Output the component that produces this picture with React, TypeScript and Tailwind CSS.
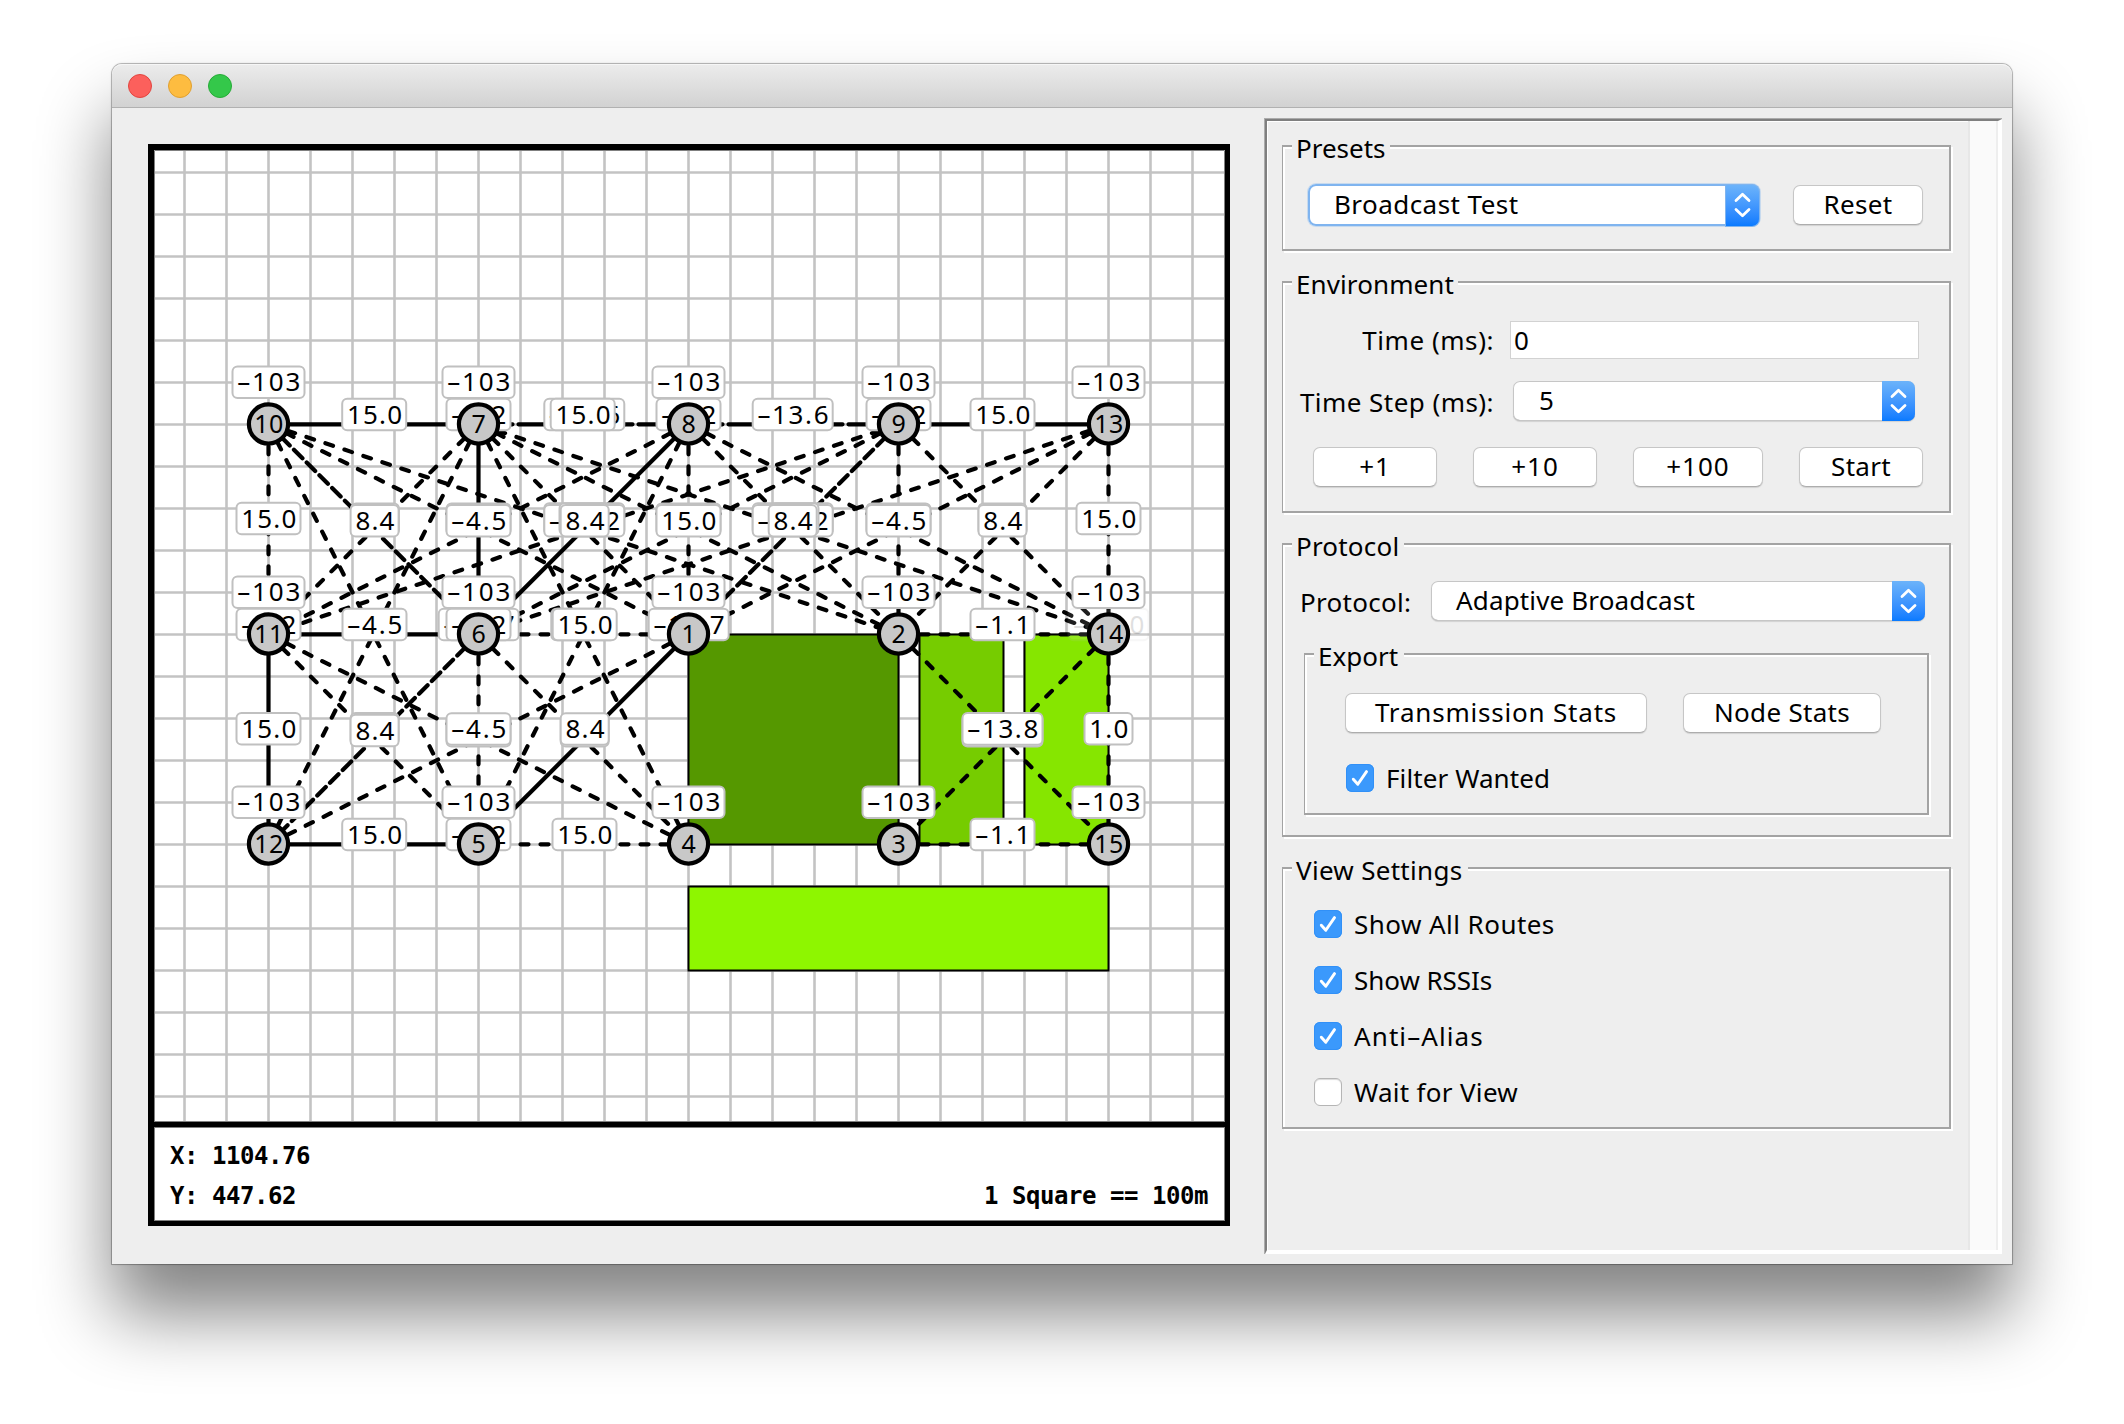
import React from "react";

type Point = [number, number];

const column = (c: number) => 268.5 + 210 * c;
const row = (r: number) => 424.3 + 210 * r;

const nodes: Record<number, Point> = {
  10: [0, 0], 7: [1, 0], 8: [2, 0], 9: [3, 0], 13: [4, 0],
  11: [0, 1], 6: [1, 1], 1: [2, 1], 2: [3, 1], 14: [4, 1],
  12: [0, 2], 5: [1, 2], 4: [2, 2], 3: [3, 2], 15: [4, 2],
};

const dashedRoutes: Point[] = [
  [11, 10], [1, 8], [2, 9], [14, 13], [5, 6], [15, 14],
  [7, 11], [7, 1], [8, 2], [9, 14], [13, 2],
  [11, 5], [6, 4], [2, 15], [14, 3],
  [10, 1], [8, 11], [7, 2], [9, 6], [8, 14], [13, 1], [11, 4], [1, 12],
  [10, 2], [9, 11], [7, 14], [13, 6],
  [10, 5], [7, 12], [7, 4], [8, 5],
  [1, 6], [14, 2], [4, 5], [15, 3],
];

const denseRoutes: Point[] = [[10, 6], [9, 1], [6, 12]];

const overlappedRoutes: Point[] = [[7, 8], [8, 9]];

const solidRoutes: Point[] = [
  [7, 6], [8, 6], [1, 5], [11, 12], [10, 7], [9, 13], [11, 6], [12, 5],
];

const buildings = [
  { x: 688.5, y: 634.5, w: 210, h: 210, fill: "#559800" },
  { x: 919.5, y: 634.5, w: 84, h: 210, fill: "#76cc00" },
  { x: 1024.5, y: 634.5, w: 84, h: 210, fill: "#86e600" },
  { x: 688.5, y: 886.5, w: 420, h: 84, fill: "#8ef600" },
];

/* Signal labels in drawing order: centre x, centre y, text */
const labels: [number, number, string][] = [
  [478.5, 414.5, "–8.2"], [688.5, 414.5, "–8.2"], [898.5, 414.5, "–8.2"],
  [584.3, 414.5, "–13.6"], [374.2, 414.5, "15.0"], [582.7, 414.5, "15.0"],
  [792.7, 414.5, "–13.6"], [1002.5, 414.5, "15.0"],
  [268.5, 518.5, "15.0"], [375, 519.2, "8.4"], [374.6, 520.8, "8.4"],
  [478.5, 519.2, "–4.5"], [478.5, 520.8, "–4.5"],
  [584.3, 519, "–14.2"], [584.3, 520.8, "–14.2"], [583.5, 519, "8.4"], [584.7, 520.8, "8.4"],
  [688.5, 519.2, "15.0"], [688.5, 520.8, "15.0"],
  [792.7, 519, "–14.2"], [792.7, 520.8, "–14.2"], [794.5, 519, "8.4"], [792.7, 520.8, "8.4"],
  [898.5, 519.2, "–4.5"], [898.5, 520.8, "–4.5"],
  [1002.5, 519.2, "8.4"], [1002.5, 520.8, "8.4"], [1108.5, 518.5, "15.0"],
  [268.5, 624.5, "–8.2"], [374.5, 624.5, "–4.5"],
  [478.7, 624.5, "–14.7"], [478.5, 624.5, "–8.2"],
  [583.3, 624.5, "–4.5"], [584.7, 624.5, "15.0"],
  [688.7, 624.5, "–14.7"], [1002.5, 624.5, "–1.1"],
  [268.5, 728.7, "15.0"], [374.6, 728.9, "8.4"], [374.6, 730.5, "8.4"],
  [478.5, 730.6, "–4.5"], [478.5, 729, "–4.5"],
  [584.7, 730.6, "8.4"], [584.7, 729, "8.4"],
  [1002.5, 730.6, "–13.8"], [1002.5, 728.9, "–13.8"], [1108.5, 728.7, "1.0"],
  [374.2, 834.5, "15.0"], [478.5, 834.5, "–8.2"], [584.5, 834.5, "15.0"], [1002.5, 834.5, "–1.1"],
];

function Tag({ x, y, text }: { x: number; y: number; text: string }) {
  const inner = [...text].reduce((sum, ch) => sum + (ch === "." ? 8 : 16), 0);
  const w = inner + 8;
  return (
    <g>
      <rect x={x - w / 2} y={y - 15.8} width={w} height={31.6} rx={5} fill="#fff" stroke="#c0c0c0" strokeWidth={2} />
      <text x={x + 0.3} y={y + 9} textAnchor="middle" fontSize={26} textLength={inner - 1}>
        {text}
      </text>
    </g>
  );
}

function Route({ ends, dash }: { ends: Point; dash?: string }) {
  const [a, b] = [nodes[ends[0]], nodes[ends[1]]];
  return (
    <line
      x1={column(a[0])} y1={row(a[1])} x2={column(b[0])} y2={row(b[1])}
      stroke="#000" strokeWidth={4.2} strokeLinecap="round" strokeDasharray={dash}
    />
  );
}

function NetworkMap() {
  return (
    <svg
      width="1071" height="972" viewBox="154 150 1071 972"
      className="block bg-white font-['Noto_Sans',sans-serif]"
    >
      {Array.from({ length: 25 }, (_, i) => (
        <path key={i} d={`M${184.5 + 42 * i} 150V1122`} stroke="#c3c3c3" strokeWidth={2.6} />
      ))}
      {Array.from({ length: 23 }, (_, i) => (
        <path key={i} d={`M154 ${172.5 + 42 * i}H1225`} stroke="#c3c3c3" strokeWidth={2.6} />
      ))}
      {buildings.map((b) => (
        <rect key={b.fill} x={b.x} y={b.y} width={b.w} height={b.h} fill={b.fill} stroke="#000" strokeWidth={2} />
      ))}
      {dashedRoutes.map((r) => <Route key={r.join()} ends={r} dash="8 12" />)}
      {denseRoutes.map((r) => <Route key={r.join()} ends={r} dash="12 6" />)}
      {overlappedRoutes.map((r) => <Route key={r.join()} ends={r} dash="34 6" />)}
      {solidRoutes.map((r) => <Route key={r.join()} ends={r} />)}
      {labels.map(([x, y, t], i) => <Tag key={i} x={x} y={y} text={t} />)}
      <g opacity={0.12}>
        <Tag x={1108.5} y={624.5} text="–15.0" />
      </g>
      {Object.entries(nodes).map(([id, [c, r]]) => (
        <g key={id}>
          <circle cx={column(c)} cy={row(r) - 0.3} r={19.6} fill="#c8c8c8" stroke="#000" strokeWidth={4.2} />
          <text
            x={column(c) + 0.2} y={row(r) + 8.7} textAnchor="middle" fontSize={25}
            textLength={id.length === 2 ? 29 : undefined}
          >
            {id}
          </text>
          <Tag x={column(c)} y={row(r) - 42} text="–103" />
        </g>
      ))}
      <path d="M154.5 1122V150.5H1224.5V1122M154 1121.5H1225" fill="none" stroke="#808080" />
    </svg>
  );
}

function Group({ title, gap, className, children }: {
  title: string; gap: string; className: string; children: React.ReactNode;
}) {
  return (
    <section
      className={`border-2 border-l border-[#a3a3a3] shadow-[inset_2px_2px_0_#fff,2px_2px_0_#fff] ${className}`}
    >
      <h2 className={`-mt-[15px] ml-[9px] h-8 bg-[#eee] pl-1 whitespace-nowrap ${gap}`}>{title}</h2>
      {children}
    </section>
  );
}

function Button({ children, className }: { children: React.ReactNode; className: string }) {
  return (
    <button
      className={`flex h-10 items-center justify-center rounded-[7px] border border-[#c6c6c6] border-b-[#adadad] bg-white pb-[2px] shadow-[0_1px_1px_rgba(0,0,0,0.12)] ${className}`}
    >
      {children}
    </button>
  );
}

function Chevrons() {
  return (
    <svg width="33" height="40" viewBox="0 0 33 40" fill="none" stroke="#fff" strokeWidth="2.8" strokeLinecap="round" strokeLinejoin="round">
      <path d="M10 15.5L16.5 9.2L23 15.5M10 24.5L16.5 30.8L23 24.5" />
    </svg>
  );
}

function Select({ value, className, focused }: { value: string; className: string; focused?: boolean }) {
  return (
    <div
      className={`flex items-center justify-between bg-white ${
        focused
          ? "h-[42px] rounded-[8px] shadow-[inset_0_0_0_2px_#7fb4ef,0_0_0_1px_rgba(127,180,239,0.35)]"
          : "h-10 rounded-[7px] shadow-[inset_0_0_0_1px_#c6c6c6,inset_0_-1px_0_#a8a8a8,0_1px_1px_rgba(0,0,0,0.12)]"
      } ${className}`}
    >
      <span className="pb-[2px]">{value}</span>
      <span
        className={`flex w-[33px] items-center justify-center overflow-hidden rounded-r-[7px] bg-linear-to-b from-[#6cb3fa] to-[#077aff] ${
          focused ? "mr-px h-[41px] shadow-[0_0_0_1px_#7fb4ef]" : "h-10"
        }`}
      >
        <Chevrons />
      </span>
    </div>
  );
}

function Check({ label, tracking, checked = true, className = "" }: {
  label: string; tracking: string; checked?: boolean; className?: string;
}) {
  return (
    <label className={`flex h-7 items-center gap-3 ${className}`}>
      <span
        className={
          checked
            ? "size-7 rounded-[6px] bg-[#3b99fc] shadow-[inset_0_0_0_1px_#3190f7]"
            : "size-7 rounded-[6px] border border-[#b5b5b5] bg-white shadow-[inset_0_1px_1px_rgba(0,0,0,0.15)]"
        }
      >
        {checked && (
          <svg width="28" height="28" viewBox="0 0 28 28" fill="none" stroke="#fff" strokeWidth="2.9" strokeLinecap="round" strokeLinejoin="round">
            <path d="M7.3 15.2L11.8 20.3L20.5 7.6" />
          </svg>
        )}
      </span>
      <span className={tracking}>{label}</span>
    </label>
  );
}

export default function App() {
  return (
    <div className="h-[1424px] w-[2124px] overflow-hidden bg-white pt-16 pl-28 font-['Noto_Sans',sans-serif] text-[26px] leading-8 text-black">
      <div className="h-[1200px] w-[1900px] rounded-t-[10px] bg-[#eee] shadow-[0_0_0_1px_rgba(0,0,0,0.22),0_0_3px_rgba(0,0,0,0.2),0_50px_72px_rgba(0,0,0,0.49)]">
        <header className="flex h-11 items-center gap-4 rounded-t-[10px] border-b border-[#b1b1b1] bg-linear-to-b from-[#ececec] to-[#d2d2d2] pl-4 shadow-[inset_0_1px_0_#f6f6f6]">
          <i className="size-6 rounded-full border border-[#e2453f] bg-[#fc605c]" />
          <i className="size-6 rounded-full border border-[#e0a030] bg-[#fdbc40]" />
          <i className="size-6 rounded-full border border-[#26ab37] bg-[#34c84a]" />
        </header>

        <main className="flex">
          <div className="mt-9 ml-9 h-[1082px] w-[1082px] border-t-6 border-r-5 border-b-5 border-l-6 border-black bg-white">
            <NetworkMap />
            <footer className="flex h-[99px] items-end justify-between border-t-5 border-black pr-[17px] pb-[5px] pl-4 font-['DejaVu_Sans_Mono',monospace] text-[24px] leading-10 font-bold tracking-[-0.45px] shadow-[inset_0_1px_0_#808080,inset_1px_0_0_#808080,inset_-1px_-1px_0_#808080]">
              <div>
                <p>X: 1104.76</p>
                <p>Y: 447.62</p>
              </div>
              <p>1 Square == 100m</p>
            </footer>
          </div>

          <aside className="mt-[10px] ml-[34px] h-[1136px] w-[738px] border-t border-l border-[#ababab]">
            <div className="flex h-[1135px] w-[737px] border-t-2 border-r-4 border-b-4 border-l-2 border-t-[#7f7f7f] border-r-white border-b-white border-l-[#7f7f7f] shadow-[inset_1px_1px_0_#fff]">
              <div className="flex w-[701px] flex-col gap-[30px] pt-6 pl-[15px]">
                <Group title="Presets" gap="w-[98px]" className="h-[106px] w-[669px]">
                  <div className="mt-5 ml-[25px] flex items-center">
                    <Select value="Broadcast Test" focused className="w-[452px] pl-[26px] tracking-[0.45px]" />
                    <Button className="ml-[33px] w-[130px] tracking-[0.3px]">Reset</Button>
                  </div>
                </Group>

                <Group title="Environment" gap="w-[166px] tracking-[0.1px]" className="h-[232px] w-[669px]">
                  <div className="mt-[21px] flex items-center">
                    <span className="w-[211px] text-right tracking-[0.55px]">Time (ms):</span>
                    <div className="ml-4 flex h-[38px] w-[409px] items-center border border-[#d2d2d2] bg-white pl-[3px]">0</div>
                  </div>
                  <div className="mt-[22px] flex items-center">
                    <span className="w-[211px] pt-[2px] text-right whitespace-nowrap tracking-[0.45px]">Time Step (ms):</span>
                    <Select value="5" className="ml-[19px] w-[402px] pl-[26px]" />
                  </div>
                  <div className="mt-[26px] ml-[30px] flex gap-9">
                    <Button className="w-[124px] tracking-[1px]">+1</Button>
                    <Button className="w-[124px] tracking-[1px]">+10</Button>
                    <Button className="w-[130px] tracking-[1px]">+100</Button>
                    <Button className="w-[124px] tracking-[0.3px]">Start</Button>
                  </div>
                </Group>

                <Group title="Protocol" gap="w-[112px] tracking-[0.2px]" className="h-[294px] w-[669px]">
                  <div className="mt-[19px] ml-[17px] flex items-center">
                    <span className="w-[131px] pt-[2px] tracking-[0.3px]">Protocol:</span>
                    <Select value="Adaptive Broadcast" className="w-[494px] pl-[25px] tracking-[0.15px]" />
                  </div>
                  <Group title="Export" gap="w-[90px]" className="mt-8 ml-[21px] h-[162px] w-[625px]">
                    <div className="mt-[21px] ml-10 flex gap-9">
                      <Button className="w-[302px] tracking-[0.8px]">Transmission Stats</Button>
                      <Button className="w-[198px] tracking-[0.3px]">Node Stats</Button>
                    </div>
                    <Check label="Filter Wanted" tracking="tracking-[0.1px]" className="mt-[31px] ml-[41px]" />
                  </Group>
                </Group>

                <Group title="View Settings" gap="w-[176px] tracking-[0.3px]" className="h-[262px] w-[669px]">
                  <div className="mt-6 ml-[31px] flex flex-col gap-7">
                    <Check label="Show All Routes" tracking="tracking-[0.45px]" />
                    <Check label="Show RSSIs" tracking="-tracking-[0.05px]" />
                    <Check label="Anti–Alias" tracking="tracking-[1.1px]" />
                    <Check label="Wait for View" tracking="tracking-[0.3px]" checked={false} />
                  </div>
                </Group>
              </div>
              <div className="w-[30px] border-r-2 border-l-2 border-r-[#eee] border-l-[#e7e7e7] bg-[#fafafa]" />
            </div>
          </aside>
        </main>
      </div>
    </div>
  );
}
